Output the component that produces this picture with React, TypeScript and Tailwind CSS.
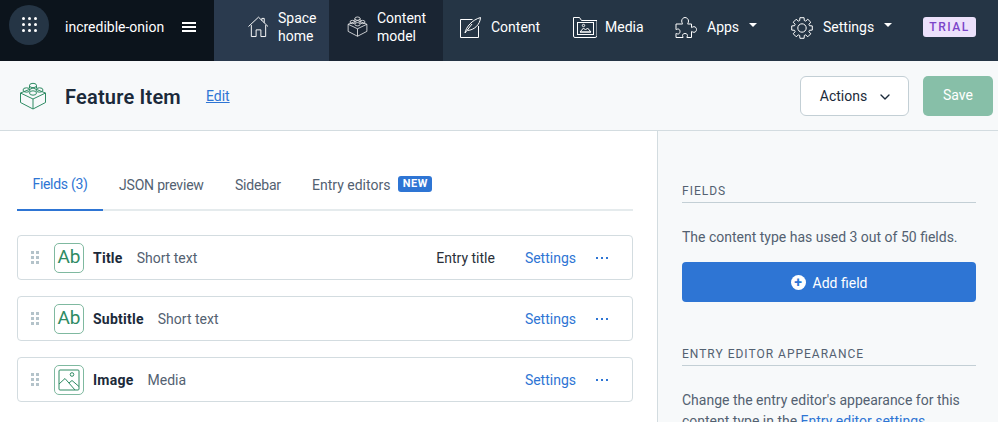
import { ChevronDown } from "lucide-react";

const LegoIcon = ({ className }: { className: string }) => (
  <svg viewBox="0 0 28 28" fill="none" stroke="currentColor" strokeWidth="1" className={className}>
    <path d="M1.500 11 14 6l12.500 5v9.500L14 27 1.500 20.500z" strokeLinejoin="round" />
    <path d="M1.500 11 14 17l12.500-6M14 17v10" />
    <ellipse cx="14" cy="3.500" rx="3.500" ry="2.200" />
    <path d="M10.500 3.500v2.500M17.500 3.500v2.500" />
    <ellipse cx="7.500" cy="8" rx="3.500" ry="2.200" />
    <ellipse cx="20.500" cy="8" rx="3.500" ry="2.200" />
    <ellipse cx="14" cy="11" rx="3.500" ry="2.200" />
  </svg>
);

const HouseIcon = () => (
  <svg viewBox="0 0 22 22" fill="none" stroke="currentColor" strokeWidth="1" className="w-[21px] h-[22px] shrink-0">
    <path d="M0.500 10.500 11 0.700l10 9.800M17 6.500V2h-2.500v2.300" strokeLinejoin="round" />
    <path d="M3.500 9v12h5v-7h5v7h5V9" strokeLinejoin="round" />
  </svg>
);

const NoteIcon = () => (
  <svg viewBox="0 0 21 21" fill="none" stroke="currentColor" strokeWidth="1" className="w-[21px] h-[21px] shrink-0">
    <path d="M12.500 2.500H0.500v18h18V9" />
    <path d="M5 16C6 10 12 3 20.500 0.500 20 8 14 13 7.500 13.500M5 16l7-9" />
  </svg>
);

const MediaIcon = () => (
  <svg viewBox="0 0 24 21" fill="none" stroke="currentColor" strokeWidth="1" className="w-[24px] h-[21px] shrink-0">
    <path d="M2 20.500a1.500 1.500 0 0 1-1.500-1.500V0.500h6l2 3h15.500v15a2 2 0 0 1-2 2z" strokeLinejoin="round" />
    <rect x="4.500" y="5.500" width="16" height="12" />
    <path d="M7 15l3.500-4 2 2 2-2 3.500 4zM7 15h11" />
    <circle cx="10.500" cy="8.500" r="1.200" />
  </svg>
);

const PuzzleIcon = () => (
  <svg viewBox="0 0 22 22" fill="none" stroke="currentColor" strokeWidth="1" className="w-[22px] h-[22px] shrink-0">
    <path
      d="M1 7h6.500c.5 0-.8-1-.8-3 0-2 1.600-3.500 3.300-3.500S13.500 2 13.500 4c0 2-1.300 3-.8 3H16.500v3.500c0 .5 1-.8 2.500-.8 1.500 0 2.500 1.300 2.500 2.800s-1 2.800-2.500 2.800c-1.500 0-2.500-1.300-2.500-.8V20.500H12c-.5 0 .5-1 .5-2 0-1.200-1-2-2.500-2s-2.500.8-2.500 2c0 1 1 2 .5 2H1v-4c0-.5 1 .5 2 .5 1.200 0 2-1 2-2.500s-.8-2.500-2-2.500c-1 0-2 1-2 .5z"
      strokeLinejoin="round"
    />
  </svg>
);

// 8 square-ish teeth round a ring
const gearPath = () => {
  const pts: string[] = [];
  for (let i = 0; i < 8; i++) {
    const a = (i * Math.PI) / 4;
    const corners: [number, number][] = [
      [7.8, a - 0.3],
      [10.5, a - 0.2],
      [10.5, a + 0.2],
      [7.8, a + 0.3],
    ];
    corners.forEach(([r, t]) => {
      pts.push(`${(11 + r * Math.sin(t)).toFixed(2)} ${(11 - r * Math.cos(t)).toFixed(2)}`);
    });
  }
  return `M${pts.join("L")}z`;
};

const GearIcon = () => (
  <svg viewBox="0 0 22 22" fill="none" stroke="currentColor" strokeWidth="1" className="w-[22px] h-[22px] shrink-0">
    <path d={gearPath()} strokeLinejoin="round" />
    <circle cx="11" cy="11" r="4.200" />
  </svg>
);

const ImageIcon = () => (
  <svg viewBox="0 0 22 22" fill="none" stroke="currentColor" strokeWidth="1" className="w-[22px] h-[22px]">
    <rect x="1" y="1" width="20" height="20" rx="1" />
    <path d="M1 15l6-5.500 10 11.500M11 14l3-2.500 7 6" />
    <circle cx="14" cy="5.500" r="1.800" />
  </svg>
);

const Caret = () => (
  <span className="w-0 h-0 mb-[5px] border-x-[4.500px] border-x-transparent border-t-[4.500px] border-t-white" />
);

const DragHandle = () => (
  <div className="grid grid-cols-2 gap-[2px] w-[8px] shrink-0 mr-[15px]">
    {[0, 1, 2, 3, 4, 5].map((i) => (
      <span key={i} className="w-[3px] h-[3px] bg-[#b4c3ca]" />
    ))}
  </div>
);

const FieldRow = ({
  name,
  type,
  image,
  entryTitle,
}: {
  name: string;
  type: string;
  image?: boolean;
  entryTitle?: boolean;
}) => (
  <div className="flex items-center h-[45px] border border-[#d3dce0] rounded-[4px] bg-white pl-[13px]">
    <DragHandle />
    <div className="w-[30px] h-[30px] mr-[9px] flex items-center justify-center border border-[#7fb9a0] rounded-[5px] text-[#2e8b63] text-[19px] shrink-0">
      {image ? <ImageIcon /> : "Ab"}
    </div>
    <span className="pt-[2px] font-bold tracking-[0.250px] text-[#1b2a3a] mr-[14px]">{name}</span>
    <span className="pt-[2px] text-[#536171]">{type}</span>
    {entryTitle && <span className="pt-[2px] ml-auto text-[#2a3039]">Entry title</span>}
    <a className={`pt-[2px] text-[#2e75d4] ${entryTitle ? "ml-[30px]" : "ml-auto"}`}>Settings</a>
    <svg viewBox="0 0 12 2" className="w-[12px] h-[2px] ml-[20px] mr-[24px] text-[#2e75d4]" fill="currentColor">
      <rect x="0" y="0" width="2" height="2" />
      <rect x="5" y="0" width="2" height="2" />
      <rect x="10" y="0" width="2" height="2" />
    </svg>
  </div>
);

const SectionTitle = ({ title }: { title: string }) => (
  <h2 className="text-[12px] leading-[16px] tracking-[1px] text-[#536171] uppercase border-b border-[#c3cfd5] pb-[3px]">
    {title}
  </h2>
);

export default function App() {
  return (
    <div className="w-[998px] h-[422px] overflow-hidden bg-white text-[14px] flex flex-col font-['Roboto',sans-serif]">
      {/* Top nav */}
      <nav className="h-[61px] flex bg-[#253545] text-white shrink-0">
        <div className="w-[214px] bg-[#0c141c] flex items-center pl-[9px] pb-[6px]">
          <div className="w-[40px] h-[40px] mb-[6px] rounded-full bg-[#253545] flex items-center justify-center">
            <div className="grid grid-cols-3 gap-[3px] w-fit">
              {[0, 1, 2, 3, 4, 5, 6, 7, 8].map((i) => (
                <span key={i} className="w-[3px] h-[3px] bg-white rounded-full" />
              ))}
            </div>
          </div>
          <span className="ml-[16px]">incredible-onion</span>
          <div className="ml-[18px] mb-[2px] w-[14px] flex flex-col gap-[2px]">
            <span className="h-[2px] bg-white" />
            <span className="h-[2px] bg-white" />
            <span className="h-[2px] bg-white" />
          </div>
        </div>
        <div className="w-[115px] bg-[#2a3a4e] flex items-center pl-[34px] pb-[8px] gap-[9px]">
          <HouseIcon />
          <span className="leading-[18px]">
            Space
            <br />
            home
          </span>
        </div>
        <div className="w-[114px] bg-[#1a2533] flex items-center pl-[18px] pb-[8px] gap-[9px]">
          <LegoIcon className="w-[21px] h-[21px] shrink-0" />
          <span className="leading-[18px]">
            Content
            <br />
            model
          </span>
        </div>
        <div className="flex items-center pl-[17px] pb-[6px] gap-[10px] w-[113px]">
          <NoteIcon />
          <span>Content</span>
        </div>
        <div className="flex items-center pl-[17px] pb-[6px] gap-[8px] w-[102px]">
          <MediaIcon />
          <span>Media</span>
        </div>
        <div className="flex items-center pl-[17px] pb-[6px] gap-[10px] w-[116px]">
          <PuzzleIcon />
          <span>Apps</span>
          <Caret />
        </div>
        <div className="flex items-center pl-[17px] pb-[6px] gap-[10px] w-[132px]">
          <GearIcon />
          <span>Settings</span>
          <Caret />
        </div>
        <span className="ml-[17px] mt-[17px] h-[20px] w-[53px] rounded-[3px] bg-[#ece1fb] text-[#7b44c9] text-[12px] leading-[20px] tracking-[1.500px] text-center font-medium">
          TRIAL
        </span>
      </nav>

      {/* Title bar */}
      <header className="h-[70px] shrink-0 flex items-center bg-[#f7f9fa] border-b border-[#d3dce0] pl-[19px] pr-[5px]">
        <LegoIcon className="w-[28px] h-[28px] text-[#2e8b63]" />
        <h1 className="ml-[18px] pt-[2px] text-[20px] font-semibold tracking-[0.200px] text-[#1b2a3a]">Feature Item</h1>
        <a className="ml-[25px] pt-[2px] underline text-[#2e75d4]">Edit</a>
        <button className="ml-auto w-[109px] h-[40px] pt-[2px] pl-[4px] rounded-[6px] border border-[#c3cfd5] bg-white text-[#1b2a3a] flex items-center justify-center gap-[10px]">
          Actions
          <ChevronDown size={16} strokeWidth={2} />
        </button>
        <button className="ml-[14px] w-[70px] h-[40px] rounded-[5px] bg-[#87bfa8] text-white">Save</button>
      </header>

      <div className="flex flex-1 min-h-0">
        {/* Main column */}
        <main className="w-[657px] shrink-0 pt-[40px] pl-[17px] pr-[24px]">
          <div className="flex h-[40px] border-b-2 border-[#e5ebed] text-[#536171]">
            <span className="h-[40px] w-[86px] pb-[12px] flex items-center justify-center border-b-2 border-[#2e75d4] text-[#2e75d4] tracking-[-0.300px]">
              Fields (3)
            </span>
            <span className="h-[40px] w-[116px] pl-[16px] pb-[12px] flex items-center tracking-[-0.200px]">JSON preview</span>
            <span className="h-[40px] w-[77px] pl-[16px] pb-[12px] flex items-center tracking-[-0.200px]">Sidebar</span>
            <span className="h-[40px] pl-[16px] pb-[12px] flex items-center">
              Entry editors
              <span className="ml-[8px] h-[16px] w-[34px] mb-[2px] rounded-[3px] bg-[#2e75d4] text-white text-[11px] leading-[16px] text-center font-bold tracking-[0.500px]">
                NEW
              </span>
            </span>
          </div>
          <div className="mt-[24px] flex flex-col gap-[16px]">
            <FieldRow name="Title" type="Short text" entryTitle />
            <FieldRow name="Subtitle" type="Short text" />
            <FieldRow name="Image" type="Media" image />
          </div>
        </main>

        {/* Sidebar */}
        <aside className="flex-1 bg-[#f7f9fa] border-l border-[#d3dce0] pl-[24px] pr-[22px] pt-[52px]">
          <SectionTitle title="Fields" />
          <p className="mt-[24px] text-[#536171] leading-[21px]">The content type has used 3 out of 50 fields.</p>
          <button className="mt-[14px] w-full h-[40px] pt-[2px] rounded-[4px] bg-[#2e75d4] text-white flex items-center justify-center gap-[7px]">
            <span className="w-[15px] h-[15px] mb-[2px] rounded-full bg-white text-[#2e75d4] font-bold text-[14px] leading-[14px] text-center">+</span>
            Add field
          </button>
          <div className="mt-[44px]">
            <SectionTitle title="Entry editor appearance" />
          </div>
          <p className="mt-[24px] text-[#536171] leading-[21px]">
            Change the entry editor's appearance for this content type in the <a className="text-[#2e75d4]">Entry editor settings</a>.
          </p>
        </aside>
      </div>
    </div>
  );
}
